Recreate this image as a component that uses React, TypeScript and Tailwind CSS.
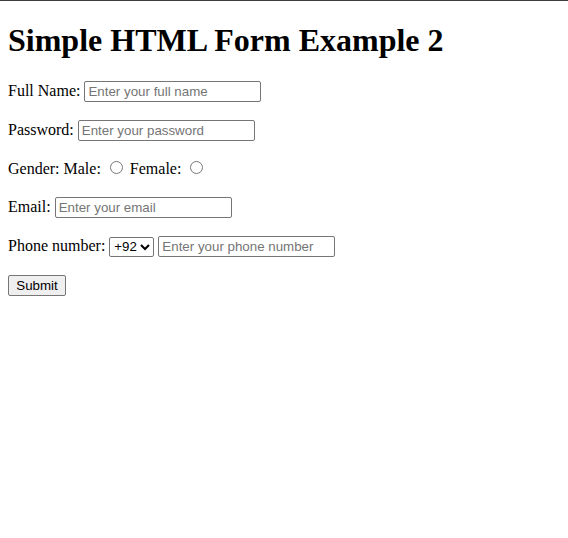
import { useState } from 'react';

const inputCls =
  'inline-block w-[177px] h-[21px] border border-[#767676] rounded-[2px] bg-white px-[3px] py-[2px] align-baseline text-[13.333px] leading-[15px] font-["Liberation_Sans",Arial,sans-serif] text-black placeholder:text-[#757575] outline-none';

const radioCls = 'mt-[3px] mr-[3px] ml-[5px] w-[13px] h-[13px]';

function App() {
  const [gender, setGender] = useState<string>('');
  const [code, setCode] = useState<string>('+92');

  return (
    <div className="min-h-[538px] bg-white text-black font-['Liberation_Serif','Times_New_Roman',serif] text-[16px] leading-[normal]">
      <div className="h-px bg-[#3c3c3c]" />
      <form className="px-2" onSubmit={(e) => e.preventDefault()}>
        <h1 className="text-[32px] font-bold leading-[normal] mt-[21.44px] mb-[20.6px]">
          Simple HTML Form Example 2
        </h1>

        {/* Full name */}
        <p className="my-4 leading-[22.8px]">
          <label htmlFor="fullname">Full Name: </label>
          <input type="text" id="fullname" placeholder="Enter your full name" className={inputCls} />
        </p>

        {/* Password */}
        <p className="my-4 leading-[22.8px]">
          <label htmlFor="password">Password: </label>
          <input type="password" id="password" placeholder="Enter your password" className={inputCls} />
        </p>

        {/* Gender */}
        <p className="my-4 leading-[22.8px]">
          Gender: <label htmlFor="male">Male: </label>
          <input
            type="radio"
            id="male"
            name="gender"
            checked={gender === 'male'}
            onChange={() => setGender('male')}
            className={radioCls}
          />{' '}
          <label htmlFor="female">Female: </label>
          <input
            type="radio"
            id="female"
            name="gender"
            checked={gender === 'female'}
            onChange={() => setGender('female')}
            className={radioCls}
          />
        </p>

        {/* Email */}
        <p className="my-4 leading-[22.8px]">
          <label htmlFor="email">Email: </label>
          <input type="email" id="email" placeholder="Enter your email" className={inputCls} />
        </p>

        {/* Phone */}
        <p className="my-4 leading-[22.8px]">
          <label htmlFor="phone">Phone number: </label>
          <select
            value={code}
            onChange={(e) => setCode(e.target.value)}
            className="inline-block h-[20px] border border-[#767676] rounded-[2px] bg-white align-baseline text-[13.333px] font-['Liberation_Sans',Arial,sans-serif]"
          >
            <option value="+92">+92</option>
            <option value="+1">+1</option>
            <option value="+44">+44</option>
          </select>{' '}
          <input type="tel" id="phone" placeholder="Enter your phone number" className={inputCls} />
        </p>

        <p className="my-4 leading-[22.8px]">
          <button
            type="submit"
            className="inline-block w-[58px] h-[21px] border border-[#767676] rounded-[2px] bg-[#efefef] text-[13.333px] leading-[15px] font-['Liberation_Sans',Arial,sans-serif] text-black"
          >
            Submit
          </button>
        </p>
      </form>
    </div>
  );
}

export default App;
